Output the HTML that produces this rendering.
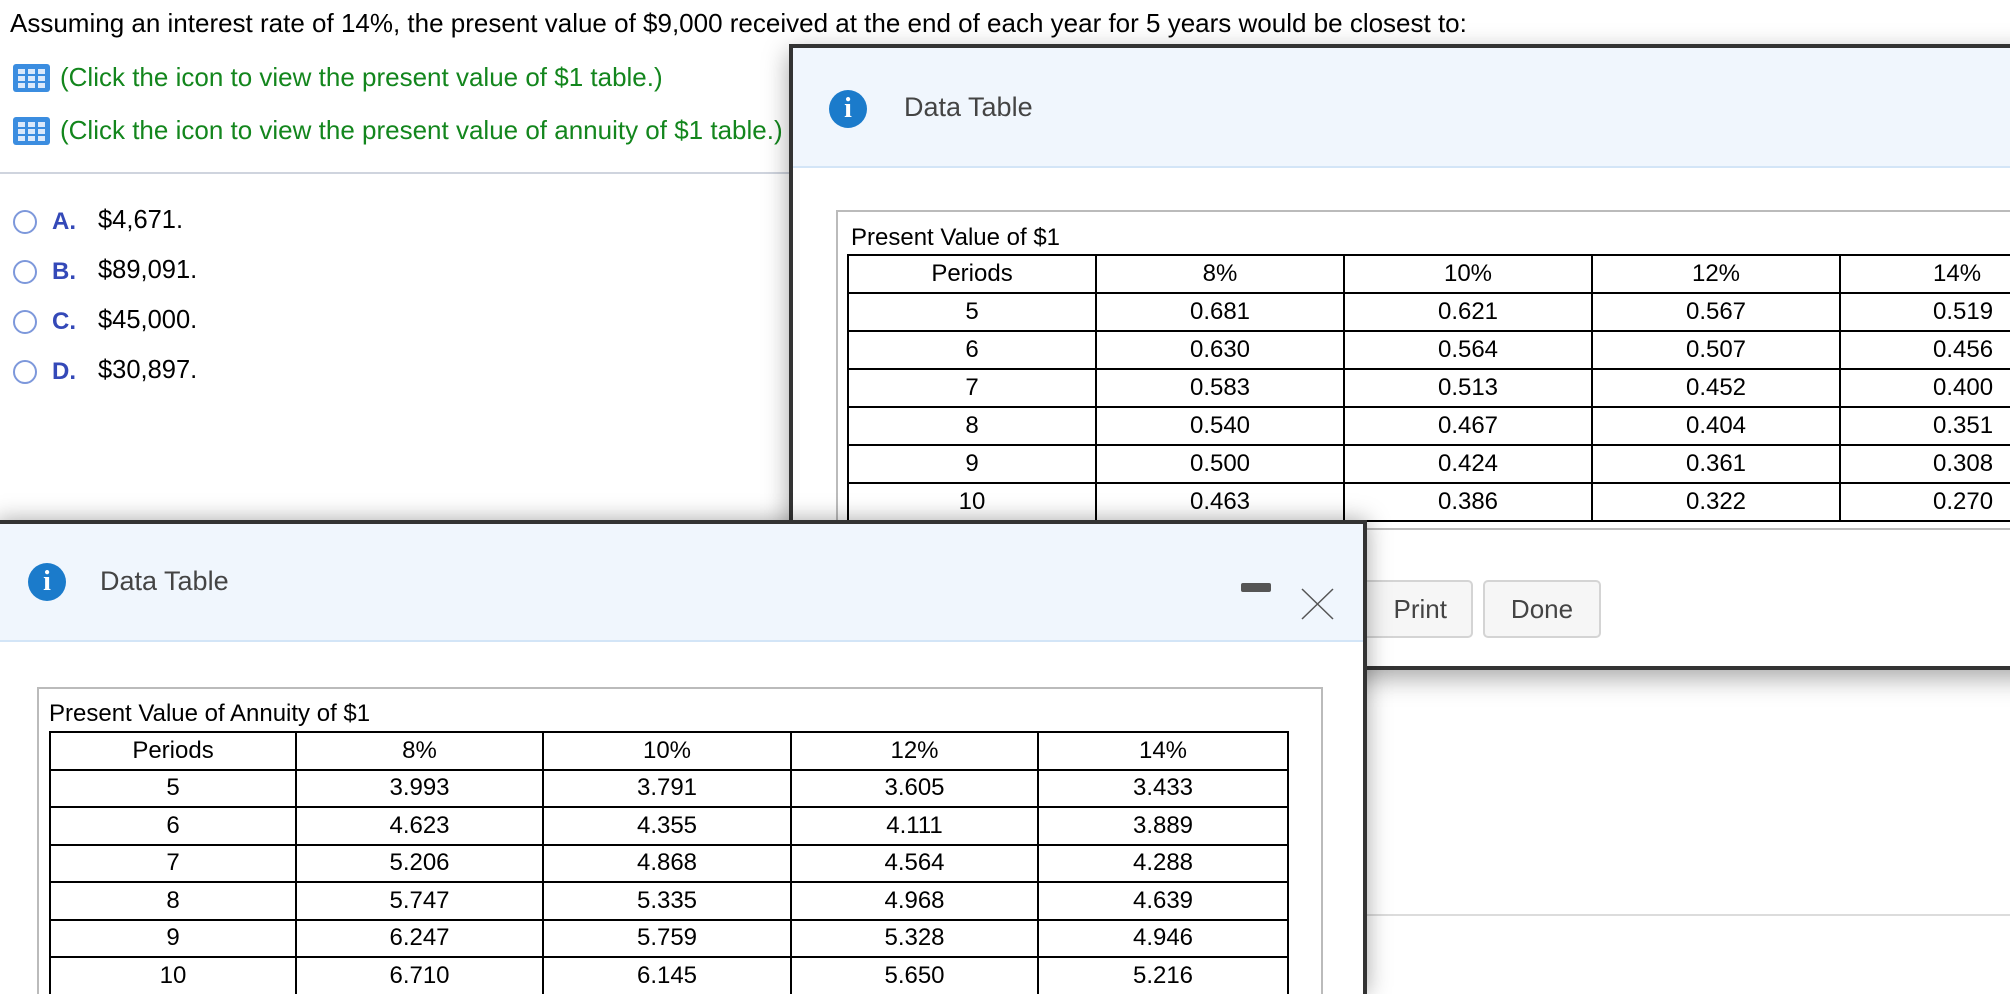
<!DOCTYPE html>
<html><head><meta charset="utf-8"><style>
*{margin:0;padding:0;box-sizing:border-box}
body{width:2010px;height:994px;overflow:hidden;background:#fff;font-family:"Liberation Sans",Arial,sans-serif;position:relative;color:#000}
.abs{position:absolute}
.q{left:10px;top:8px;font-size:26px;white-space:nowrap}
.lnk{left:60px;font-size:26px;color:#13861d;white-space:nowrap}
.ico{left:13px;width:37px;height:28px;background:#3b8de0;border-radius:3px}
.ico i{position:absolute;width:7px;height:5px;background:#dbe9fb}
.radio{left:13px;width:24px;height:24px;border:2px solid #7d98db;border-radius:50%}
.lab{left:52px;font-size:24px;color:#3449b8;font-weight:bold}
.val{left:98px;font-size:25.5px}
.dlg{background:#fff;border:4px solid #333;}
.hdr{background:#f0f6fd;border-bottom:2px solid #d3e5f7}
.info{width:38px;height:38px;border-radius:50%;background:#1b7bcb;color:#fff;font:bold 28px "Liberation Serif",serif;text-align:center;line-height:38px}
.dt{font-size:27px;color:#444}
table{border-collapse:collapse;font-size:24px;table-layout:fixed}
td{border:2px solid #000;height:38px;text-align:center;padding:0;line-height:34px}
.f td{height:37.5px}
.btn{background:#f6f6f6;border:2px solid #d4d4d4;border-radius:5px;font-size:26px;color:#444;text-align:center;line-height:54px}
</style></head><body>
<div class="abs q">Assuming an interest rate of 14%, the present value of $9,000 received at the end of each year for 5 years would be closest to:</div>
<div class="abs ico" style="top:64px"><i style="left:5px;top:5px"></i><i style="left:15px;top:5px"></i><i style="left:25px;top:5px"></i><i style="left:5px;top:12px"></i><i style="left:15px;top:12px"></i><i style="left:25px;top:12px"></i><i style="left:5px;top:19px"></i><i style="left:15px;top:19px"></i><i style="left:25px;top:19px"></i></div>
<div class="abs lnk" style="top:62px">(Click the icon to view the present value of $1 table.)</div>
<div class="abs ico" style="top:117px"><i style="left:5px;top:5px"></i><i style="left:15px;top:5px"></i><i style="left:25px;top:5px"></i><i style="left:5px;top:12px"></i><i style="left:15px;top:12px"></i><i style="left:25px;top:12px"></i><i style="left:5px;top:19px"></i><i style="left:15px;top:19px"></i><i style="left:25px;top:19px"></i></div>
<div class="abs lnk" style="top:115px">(Click the icon to view the present value of annuity of $1 table.)</div>
<div class="abs" style="left:0;top:172px;width:800px;height:2px;background:#cfd4de"></div>
<div class="abs radio" style="top:210px"></div><div class="abs lab" style="top:208px">A.</div><div class="abs val" style="top:206px">$4,671.</div>
<div class="abs radio" style="top:260px"></div><div class="abs lab" style="top:258px">B.</div><div class="abs val" style="top:256px">$89,091.</div>
<div class="abs radio" style="top:310px"></div><div class="abs lab" style="top:308px">C.</div><div class="abs val" style="top:306px">$45,000.</div>
<div class="abs radio" style="top:360px"></div><div class="abs lab" style="top:358px">D.</div><div class="abs val" style="top:356px">$30,897.</div>
<div class="abs" style="left:1366px;top:914px;width:644px;height:2px;background:#dcdcdc"></div>

<div class="abs dlg" style="left:789px;top:44px;width:1300px;height:626px;border-right:none;box-shadow:0 8px 24px rgba(0,0,0,.35);overflow:hidden">
 <div class="abs hdr" style="left:0;top:0;width:1300px;height:120px"></div>
 <div class="abs info" style="left:36px;top:42px">i</div>
 <div class="abs dt" style="left:111px;top:44px">Data Table</div>
 <div class="abs" style="left:43px;top:162px;width:1300px;height:320px;border:2px solid #bbb"></div>
 <div class="abs" style="left:58px;top:176px;font-size:24px">Present Value of $1</div>
 <table class="abs" style="left:54px;top:206px;width:1240px">
 <colgroup><col style="width:248px"><col style="width:248px"><col style="width:248px"><col style="width:248px"><col style="width:248px"></colgroup>
 <tr><td>Periods</td><td>8%</td><td>10%</td><td>12%</td><td style="text-align:left;padding-left:92px">14%</td></tr>
 <tr><td>5</td><td>0.681</td><td>0.621</td><td>0.567</td><td style="text-align:left;padding-left:92px">0.519</td></tr>
 <tr><td>6</td><td>0.630</td><td>0.564</td><td>0.507</td><td style="text-align:left;padding-left:92px">0.456</td></tr>
 <tr><td>7</td><td>0.583</td><td>0.513</td><td>0.452</td><td style="text-align:left;padding-left:92px">0.400</td></tr>
 <tr><td>8</td><td>0.540</td><td>0.467</td><td>0.404</td><td style="text-align:left;padding-left:92px">0.351</td></tr>
 <tr><td>9</td><td>0.500</td><td>0.424</td><td>0.361</td><td style="text-align:left;padding-left:92px">0.308</td></tr>
 <tr><td>10</td><td>0.463</td><td>0.386</td><td>0.322</td><td style="text-align:left;padding-left:92px">0.270</td></tr>
 </table>
 <div class="abs btn" style="left:540px;top:532px;width:140px;height:58px;text-align:right;padding-right:24px">Print</div>
 <div class="abs btn" style="left:690px;top:532px;width:118px;height:58px">Done</div>
</div>

<div class="abs dlg" style="left:-4px;top:520px;width:1371px;height:474px;border-bottom:none;box-shadow:0 0 22px rgba(0,0,0,.35);overflow:hidden">
 <div class="abs hdr" style="left:0;top:0;width:1370px;height:118px"></div>
 <div class="abs info" style="left:28px;top:39px">i</div>
 <div class="abs dt" style="left:100px;top:42px">Data Table</div>
 <div class="abs" style="left:1241px;top:59px;width:30px;height:9px;background:#555;border-radius:2px"></div>
 <svg class="abs" style="left:1301px;top:64px" width="34" height="32"><path d="M1 1L32 31M32 1L1 31" stroke="#555" stroke-width="1.5" fill="none"/></svg>
 <div class="abs" style="left:37px;top:163px;width:1286px;height:400px;border:2px solid #bbb"></div>
 <div class="abs" style="left:49px;top:176px;font-size:24px">Present Value of Annuity of $1</div>
 <table class="abs f" style="left:49px;top:207px;width:1238px">
 <colgroup><col style="width:246px"><col style="width:247px"><col style="width:248px"><col style="width:247px"><col style="width:250px"></colgroup>
 <tr><td>Periods</td><td>8%</td><td>10%</td><td>12%</td><td>14%</td></tr>
 <tr><td>5</td><td>3.993</td><td>3.791</td><td>3.605</td><td>3.433</td></tr>
 <tr><td>6</td><td>4.623</td><td>4.355</td><td>4.111</td><td>3.889</td></tr>
 <tr><td>7</td><td>5.206</td><td>4.868</td><td>4.564</td><td>4.288</td></tr>
 <tr><td>8</td><td>5.747</td><td>5.335</td><td>4.968</td><td>4.639</td></tr>
 <tr><td>9</td><td>6.247</td><td>5.759</td><td>5.328</td><td>4.946</td></tr>
 <tr><td>10</td><td>6.710</td><td>6.145</td><td>5.650</td><td>5.216</td></tr>
 </table>
</div>
</body></html>
